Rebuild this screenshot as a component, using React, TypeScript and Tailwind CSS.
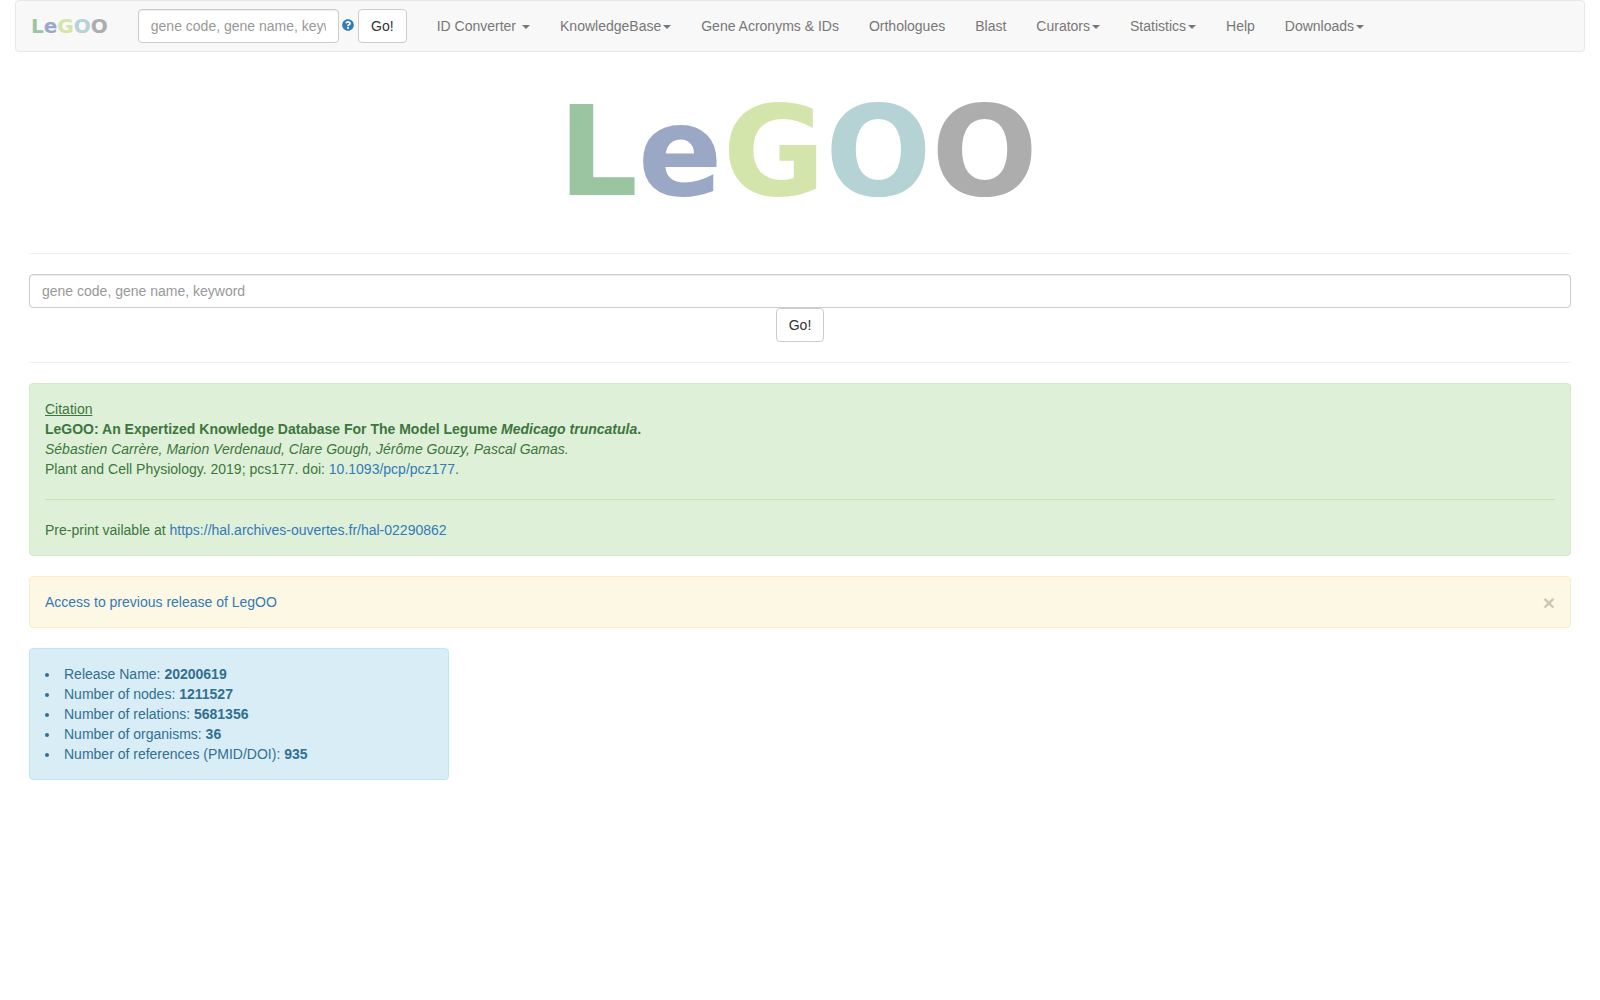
import React, { FC } from "react";
import { FaQuestionCircle } from "react-icons/fa";

const Caret: FC<{ spaced?: boolean }> = ({ spaced }) => (
  <span
    className={`inline-block w-0 h-0 align-middle border-t-4 border-x-4 border-t-[#777] border-x-transparent ml-[2px] ${
      spaced ? "ml-[6px]" : ""
    }`}
  />
);

const navItems = [
  { label: "ID Converter", caret: true, spaced: true },
  { label: "KnowledgeBase", caret: true },
  { label: "Gene Acronyms & IDs" },
  { label: "Orthologues" },
  { label: "Blast" },
  { label: "Curators", caret: true },
  { label: "Statistics", caret: true },
  { label: "Help" },
  { label: "Downloads", caret: true },
];

const Logo: FC = () => (
  <>
    <span className="text-[#9ac5a0]">L</span>
    <span className="text-[#9aa8c5]">e</span>
    <span className="text-[#d3e5ab]">G</span>
    <span className="text-[#b5d2d5]">O</span>
    <span className="text-[#adadad]">O</span>
  </>
);

const inputClass =
  "h-[34px] px-3 py-[6px] bg-white border border-[#ccc] rounded shadow-[inset_0_1px_1px_rgba(0,0,0,0.075)] text-sm text-[#555] placeholder:text-[#999] outline-none";
const btnClass =
  "h-[34px] px-3 bg-white border border-[#ccc] rounded text-sm text-[#333]";

const stats = [
  { label: "Release Name:", value: "20200619" },
  { label: "Number of nodes:", value: "1211527" },
  { label: "Number of relations:", value: "5681356" },
  { label: "Number of organisms:", value: "36" },
  { label: "Number of references (PMID/DOI):", value: "935" },
];

export default function App() {
  return (
    <div className="min-h-[1000px] bg-white font-['Liberation_Sans',Arial,sans-serif] text-sm leading-5 text-[#333]">
      <nav className="mx-[15px] h-[52px] flex bg-[#f8f8f8] border border-[#e7e7e7] rounded">
        <a className="px-[15px] text-[20px] leading-[50px] font-bold font-['DejaVu_Sans',sans-serif]">
          <Logo />
        </a>
        <form className="px-[15px] flex items-center h-[50px]">
          <input
            className={`${inputClass} w-[201px]`}
            placeholder="gene code, gene name, keyword"
          />
          <FaQuestionCircle className="ml-[3px] mb-[2px] text-[#337ab7] text-[12px]" />
          <button type="button" className={`${btnClass} ml-[4.3px]`}>
            Go!
          </button>
        </form>
        <ul className="flex">
          {navItems.map((item) => (
            <li key={item.label} className="px-[15px] leading-[50px] text-[#777]">
              {item.label}
              {item.caret && <Caret spaced={item.spaced} />}
            </li>
          ))}
        </ul>
      </nav>

      <main className="mx-[29px] mt-[20px]">
        <h1 className="h-[161px] text-center text-[125px] leading-[160px] font-bold font-['DejaVu_Sans',sans-serif] pr-[4px]">
          <Logo />
        </h1>
        <hr className="my-5 border-[#eee]" />
        <form className="flex flex-col items-center">
          <input
            className={`${inputClass} w-full`}
            placeholder="gene code, gene name, keyword"
          />
          <button type="button" className={btnClass}>
            Go!
          </button>
        </form>
        <hr className="my-5 border-[#eee]" />

        <div className="mb-5 p-[15px] bg-[#dff0d8] border border-[#d6e9c6] rounded text-[#3c763d]">
          <p className="underline">Citation</p>
          <p className="font-bold">
            LeGOO: An Expertized Knowledge Database For The Model Legume{" "}
            <i>Medicago truncatula</i>.
          </p>
          <p className="italic">
            Sébastien Carrère, Marion Verdenaud, Clare Gough, Jérôme Gouzy, Pascal Gamas.
          </p>
          <p>
            Plant and Cell Physiology. 2019; pcs177. doi:{" "}
            <a className="text-[#337ab7]">10.1093/pcp/pcz177</a>.
          </p>
          <hr className="my-5 border-[#c9e2b3]" />
          <p>
            Pre-print vailable at{" "}
            <a className="text-[#337ab7]">https://hal.archives-ouvertes.fr/hal-02290862</a>
          </p>
        </div>

        <div className="mb-5 p-[15px] flex justify-between bg-[#fcf8e3] border border-[#faebcc] rounded">
          <a className="text-[#337ab7]">Access to previous release of LegOO</a>
          <button
            type="button"
            className="h-5 text-[21px] leading-[21px] font-bold text-black opacity-20"
          >
            ×
          </button>
        </div>

        <div className="w-[420px] p-[15px] bg-[#d9edf7] border border-[#bce8f1] rounded text-[#31708f]">
          <ul className="list-disc pl-[15px]">
            {stats.map((s) => (
              <li key={s.label} className="pl-[4px]">
                {s.label} <b>{s.value}</b>
              </li>
            ))}
          </ul>
        </div>
      </main>
    </div>
  );
}
